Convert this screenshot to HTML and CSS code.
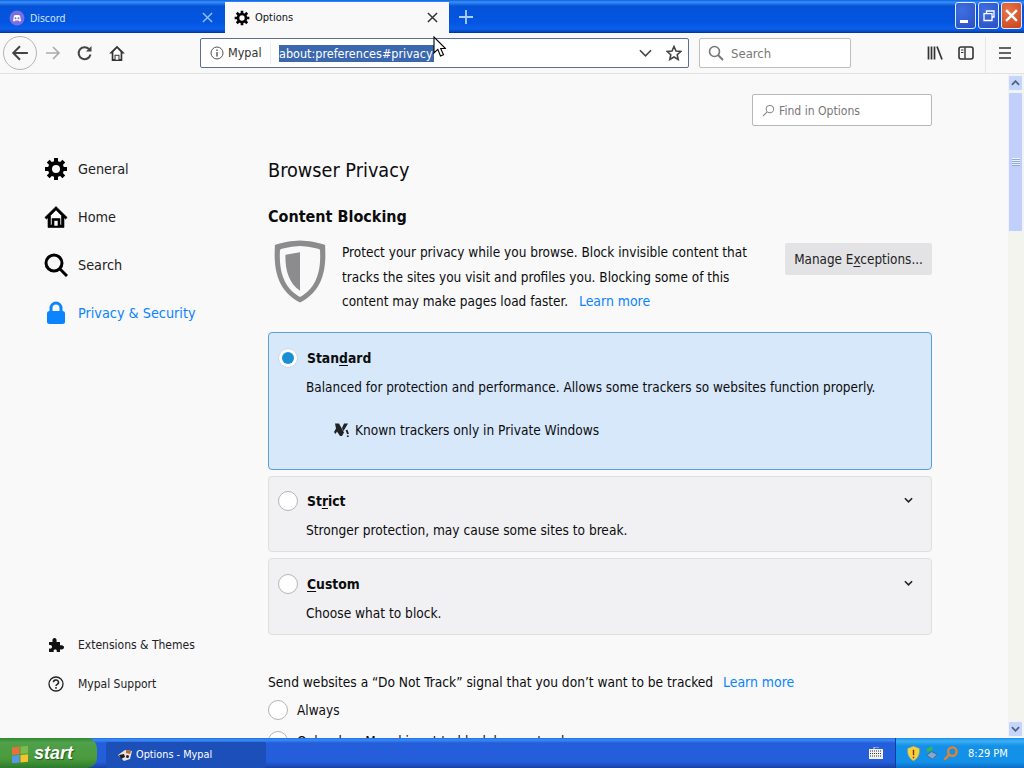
FILE: index.html
```html
<!DOCTYPE html>
<html lang="en">
<head>
  <meta charset="UTF-8" />
  <title>Options - Mypal</title>
  <link rel="stylesheet" href="styles.css">
</head>
<body>
  <div class="tabbar">
    <div class="tab">
      <svg class="tab-icon" viewBox="0 0 16 16"><circle cx="8" cy="8" r="7.5" fill="#7a6fe0"/><path d="M4 11 5 5.500 7 5h2l2 .5 1 5.500-1.500.5-.8-1H6.300l-.8 1z" fill="#fff"/><circle cx="6.500" cy="8.300" r="1" fill="#7a6fe0"/><circle cx="9.500" cy="8.300" r="1" fill="#7a6fe0"/></svg>
      <span class="tab-title">Discord</span>
      <svg class="tab-close" viewBox="0 0 12 12"><path d="M1 1 11 11M11 1 1 11" stroke="#8fc0f5" stroke-width="1.600" fill="none"/></svg>
    </div>
    <div class="tab active">
      <svg class="tab-icon" viewBox="0 0 24 24"><use href="#gear"/></svg>
      <span class="tab-title">Options</span>
      <svg class="tab-close" viewBox="0 0 12 12"><path d="M1 1 11 11M11 1 1 11" stroke="#333" stroke-width="1.600" fill="none"/></svg>
    </div>
    <svg class="new-tab" viewBox="0 0 14 14"><path d="M7 0V14M0 7H14" stroke="#a9d0fa" stroke-width="1.800"/></svg>
    <div class="win-buttons">
      <div class="win-btn"><span class="min-glyph"></span></div>
      <div class="win-btn"><svg viewBox="0 0 12 12" width="12" height="12"><path d="M3.500 3V1h7.500v6H9M1 3.700h8V10.500H1z" stroke="#fff" stroke-width="1.300" fill="none"/></svg></div>
      <div class="win-btn close"><svg viewBox="0 0 12 12" width="13" height="13"><path d="M1 1 11 11M11 1 1 11" stroke="#fff" stroke-width="2.200" fill="none"/></svg></div>
    </div>
  </div>

  <div class="toolbar">
    <div class="back-btn">
      <svg viewBox="0 0 16 16" width="18" height="18"><path d="M15 8H2M8 2 2 8l6 6" stroke="#444" stroke-width="1.800" fill="none"/></svg>
    </div>
    <svg class="tool-icon" viewBox="0 0 16 16"><path d="M15 8H2M8 2 2 8l6 6" transform="matrix(-1 0 0 1 16 0)" stroke="#aaa" stroke-width="1.600" fill="none"/></svg>
    <svg class="tool-icon" viewBox="0 0 16 16"><path d="M13.500 9.500A6 6 0 1 1 12 4" stroke="#444" stroke-width="2" fill="none"/><path d="M14.500 1v5.500H9z" fill="#444"/></svg>
    <svg class="tool-icon home" viewBox="0 0 16 16"><path d="M8 1.500 1 8.500h2.300V15h9.400V8.500H15zM6.700 14v-3.500h2.600V14z" fill="#333"/><path d="M8 3.800 4.800 7v6.300h1V9.500h4.400v3.800h1V7z" fill="#fff"/></svg>
    <div class="urlbar">
      <svg class="info-icon" viewBox="0 0 14 14"><circle cx="7" cy="7" r="6" stroke="#555" fill="none"/><path d="M7 6v4.500M7 3.500v1.400" stroke="#555" stroke-width="1.400"/></svg>
      <span class="identity">Mypal</span>
      <span class="url-text"><span class="url-selected">about:preferences#privacy</span></span>
      <svg class="url-chevron" viewBox="0 0 14 8"><path d="M1 1 7 7l6-6" stroke="#444" stroke-width="1.700" fill="none"/></svg>
      <svg class="url-star" viewBox="0 0 16 16"><path d="M8 1.500 10 6l4.800.5-3.600 3.200 1 4.800L8 12l-4.200 2.500 1-4.800L1.200 6.500 6 6z" stroke="#444" stroke-width="1.600" fill="none"/></svg>
    </div>
    <div class="searchbar">
      <svg viewBox="0 0 16 16" width="16" height="16"><circle cx="6.500" cy="6.500" r="5" stroke="#777" stroke-width="1.600" fill="none"/><path d="M10 10 15 15" stroke="#777" stroke-width="2"/></svg>
      <span>Search</span>
    </div>
    <div class="tool-right">
      <svg class="tool-icon" viewBox="0 0 16 16"><path d="M1.500 1.500V14.500M4.500 1.500V14.500M7.500 1.500V14.500M10 1.500 15 14.500" stroke="#333" stroke-width="1.700" fill="none"/></svg>
      <svg class="tool-icon" viewBox="0 0 16 16"><rect x="1" y="2" width="14" height="12" rx="2" stroke="#333" stroke-width="1.600" fill="none"/><path d="M7 2.500V13.500" stroke="#333" stroke-width="1.400"/><path d="M3 5h2.500M3 7.500h2.500" stroke="#333"/></svg>
      <div class="tool-sep"></div>
      <svg class="tool-icon" viewBox="0 0 16 16"><path d="M2 3H14M2 8H14M2 13H14" stroke="#333" stroke-width="1.700"/></svg>
    </div>
  </div>

  <div class="viewport">
    <div class="page">
      <nav class="sidebar">
        <div class="nav-group">
          <div class="nav-item">
            <svg class="nav-icon" viewBox="0 0 24 24"><use href="#gear"/></svg>General
          </div>
          <div class="nav-item">
            <svg class="nav-icon" viewBox="0 0 24 24"><path d="M12 1.500 0.800 12.500 2.500 14 4 12.700V22.500H20V12.700L21.500 14l1.700-1.500zM10 21v-5.500h4V21zM6.500 20V10.500L12 5l5.500 5.500V20H16v-6.500H8V20z" fill="#000" fill-rule="evenodd" stroke="#000" stroke-width=".6"/></svg>Home
          </div>
          <div class="nav-item">
            <svg class="nav-icon" viewBox="0 0 24 24"><circle cx="10" cy="10" r="8" stroke="#000" stroke-width="3" fill="none"/><path d="M15.500 15.500 23 23" stroke="#000" stroke-width="3"/></svg>Search
          </div>
          <div class="nav-item selected">
            <svg class="nav-icon" viewBox="0 0 24 24"><path d="M7 11V7a5 5 0 0 1 10 0v4" stroke="#0a84ff" stroke-width="3" fill="none"/><rect x="3" y="10" width="18" height="13" rx="2.500" fill="#0a84ff"/></svg>Privacy &amp; Security
          </div>
        </div>
        <div class="nav-group small">
          <div class="nav-item">
            <svg class="nav-icon" viewBox="0 0 16 16"><path d="M1 5h3.500C4 2 5 1 6.500 1S9 2 8.500 5H12v3.300c3-.6 4 .5 4 2s-1 2.600-4 2V15H8.700c.5-2-.5-2.500-1.500-2.500S5.200 13 5.700 15H1v-3.500c2 .5 3-.2 3-1.700S3 7.600 1 8z" fill="#111"/></svg>Extensions &amp; Themes
          </div>
          <div class="nav-item">
            <svg class="nav-icon" viewBox="0 0 16 16"><circle cx="8" cy="8" r="7" stroke="#222" stroke-width="1.300" fill="none"/><path d="M5.500 6.300a2.500 2.300 0 1 1 3.700 2C8.300 8.800 8 9.200 8 10" stroke="#222" stroke-width="1.500" fill="none"/><path d="M8 11v1.800" stroke="#222" stroke-width="1.500"/></svg>Mypal Support
          </div>
        </div>
      </nav>

      <main class="main">
        <div class="find-row">
          <div class="find-box">
            <svg viewBox="0 0 14 14" width="13" height="13"><circle cx="8.500" cy="5.500" r="4" stroke="#888" stroke-width="1.100" fill="none"/><path d="M5.500 8.500 1 13" stroke="#888" stroke-width="1.200"/></svg>
            <span>Find in Options</span>
          </div>
        </div>
        <h1>Browser Privacy</h1>
        <h2>Content Blocking</h2>
        <div class="intro">
          <svg class="shield" viewBox="0 0 56 64" preserveAspectRatio="none"><path d="M28 1.500C20 2 10 3 3 6 1.500 28 4 50 28 62.500 52 50 54.500 28 53 6 46 3 36 2 28 1.500z" fill="#8c8c8e"/><path d="M28 7C21 7.500 13 8.500 8 10.500 7 28 9.500 47 28 57 46.500 47 49 28 48 10.500 43 8.500 35 7.500 28 7z" fill="#f9f9fa"/><path d="M28 13 13.500 15.500C13 29 16 43 28 51z" fill="#8c8c8e"/></svg>
          <p>Protect your privacy while you browse. Block invisible content that tracks the sites you visit and profiles you. Blocking some of this content may make pages load faster. <a class="link">Learn more</a></p>
          <button class="manage-btn">Manage E<u>x</u>ceptions...</button>
        </div>

        <div class="card selected">
          <div class="card-head">
            <span class="radio checked"></span>
            <span class="card-title">Stan<u>d</u>ard</span>
          </div>
          <div class="card-desc">Balanced for protection and performance. Allows some trackers so websites function properly.</div>
          <div class="card-note">
            <svg viewBox="0 0 16 16" width="16" height="16"><path d="M1 1.500h4l5 9-2 3.500H6L3 9.500 1.500 12 0 10l2-3.500zM10 1.500h4L9.500 9 8 6z" fill="#222"/><path d="M12.500 8l1.500 4" stroke="#222" stroke-width="2"/><path d="M13.800 13.500v1.500" stroke="#222" stroke-width="1.800"/></svg>
            Known trackers only in Private Windows
          </div>
        </div>
        <div class="card">
          <div class="card-head">
            <span class="radio"></span>
            <span class="card-title">St<u>r</u>ict</span>
            <svg class="card-chevron" viewBox="0 0 10 6"><path d="M1 1 5 5 9 1" stroke="#222" stroke-width="1.800" fill="none"/></svg>
          </div>
          <div class="card-desc">Stronger protection, may cause some sites to break.</div>
        </div>
        <div class="card">
          <div class="card-head">
            <span class="radio"></span>
            <span class="card-title"><u>C</u>ustom</span>
            <svg class="card-chevron" viewBox="0 0 10 6"><path d="M1 1 5 5 9 1" stroke="#222" stroke-width="1.800" fill="none"/></svg>
          </div>
          <div class="card-desc">Choose what to block.</div>
        </div>

        <p class="dnt">Send websites a “Do Not Track” signal that you don’t want to be tracked <a class="link">Learn more</a></p>
        <div class="dnt-option"><span class="radio"></span>Always</div>
        <div class="dnt-option"><span class="radio"></span>Only when Mypal is set to block known trackers</div>
      </main>
    </div>

    <div class="scrollbar">
      <div class="scroll-btn"><svg viewBox="0 0 10 6" width="9" height="6"><path d="M1 5 5 1l4 4" stroke="#4d6185" stroke-width="2" fill="none"/></svg></div>
      <div class="scroll-thumb"><span class="grip"></span></div>
      <div class="scroll-track"></div>
      <div class="scroll-btn"><svg viewBox="0 0 10 6" width="9" height="6"><path d="M1 1 5 5l4-4" stroke="#4d6185" stroke-width="2" fill="none"/></svg></div>
    </div>
  </div>

  <div class="taskbar">
    <div class="start">
      <svg viewBox="0 0 18 18" width="18" height="19"><g transform="skewY(-6) translate(0 2)"><rect x="1" y="1" width="7.500" height="7.500" fill="#e8703a"/><rect x="9.500" y="1" width="7.500" height="7.500" fill="#7dbb4a"/><rect x="1" y="9.500" width="7.500" height="7.500" fill="#5a96e6"/><rect x="9.500" y="9.500" width="7.500" height="7.500" fill="#f5c32c"/></g></svg>
      <span>start</span>
    </div>
    <div class="task-btn">
      <svg viewBox="0 0 16 16" width="16" height="16"><path d="M1 8 8 3l7 1-2 8-6 2z" fill="#e4e4e4"/><path d="M2 8l5-1 1 3-4 2z" fill="#2a1c10"/><path d="M9 3l5 1-1 3-4-1z" fill="#c8641e"/><circle cx="10.500" cy="9.500" r="1.500" fill="#222"/></svg>
      <span>Options - Mypal</span>
    </div>
    <svg class="keyboard" viewBox="0 0 14 12" width="14" height="12"><rect x="0" y="2" width="14" height="10" fill="#f2f2f2"/><path d="M1 4h12M1 6.500h12M1 9h12" stroke="#333" stroke-dasharray="1 1"/><path d="M5 2V0h5" stroke="#ddd" fill="none"/></svg>
    <div class="tray">
      <svg viewBox="0 0 14 16" width="13" height="15"><path d="M7 0 13.500 2.500C14 9 12 13 7 16 2 13 0 9 .5 2.500z" fill="#f4d33a" stroke="#7a8fae" stroke-width=".7"/><path d="M7 4v6M7 11.500v1.500" stroke="#8a2a10" stroke-width="1.500"/></svg>
      <svg viewBox="0 0 16 16" width="15" height="15"><path d="M3 3 9 0v5L3 6z" fill="#3bb44a"/><path d="M8 6l6 3-5 5-6-4z" fill="#8ba6cf" stroke="#355" stroke-width=".6"/></svg>
      <svg viewBox="0 0 16 16" width="15" height="15"><circle cx="10" cy="6" r="4.500" stroke="#e8832a" stroke-width="2.500" fill="none"/><path d="M7 9 1.500 14.500" stroke="#e8832a" stroke-width="2.500"/></svg>
      <span class="clock">8:29 PM</span>
    </div>
  </div>

  <svg class="cursor" viewBox="0 0 13 22" width="13" height="22"><path d="M1 1V17L4.800 13.400 7.500 20l3-1.200-2.800-6.300H12.500z" fill="#fff" stroke="#000" stroke-width="1.100"/></svg>

  <svg class="defs" width="0" height="0">
    <symbol id="gear" viewBox="0 0 24 24">
      <circle cx="12" cy="12" r="6" stroke="#000" stroke-width="4" fill="none"/>
      <g stroke="#000" stroke-width="4">
        <path d="M12 1V6M12 18V23M1 12H6M18 12H23M4.200 4.200 7.800 7.800M16.200 16.200 19.800 19.800M19.800 4.200 16.200 7.800M7.800 16.200 4.200 19.800"/>
      </g>
    </symbol>
  </svg>
</body>
</html>
```

FILE: styles.css
```css
* {
  margin: 0;
  padding: 0;
  box-sizing: border-box;
}
html, body {
  height: 100%;
  overflow: hidden;
}
body {
  position: relative;
  display: flex;
  flex-direction: column;
  font-family: "DejaVu Sans", sans-serif;
  font-stretch: condensed;
  font-size: 13.500px;
  color: #0c0c0d;
  background: #f9f9fa;
}
u {
  text-underline-offset: 2px;
}
.defs {
  position: absolute;
}

/* tabs */
.tabbar {
  display: flex;
  align-items: flex-end;
  height: 33px;
  flex: none;
  background: linear-gradient(#0a5fe6 0, #3a90f5 2px, #0553d8 6px, #0355e0 22px, #0a5fec 29px, #0544b8 32px, #02307f 33px);
}
.tab {
  display: flex;
  align-items: center;
  width: 225px;
  height: 31px;
  padding: 0 12px 0 9px;
  color: #cfe5fb;
  font-size: 10.500px;
}
.tab.active {
  width: 224px;
  padding-right: 11px;
  background: #f9f9fa;
  color: #111;
  font-size: 11px;
}
.tab-icon {
  width: 16px;
  height: 16px;
  margin-right: 5px;
}
.tab-title {
  flex: 1;
}
.tab-close {
  width: 11px;
  height: 11px;
}
.new-tab {
  width: 14px;
  height: 14px;
  margin: 0 0 9px 10px;
}
.win-buttons {
  display: flex;
  gap: 2px;
  margin: 0 2px 4px auto;
}
.win-btn {
  display: flex;
  align-items: center;
  justify-content: center;
  width: 21px;
  height: 27px;
  border: 1px solid #dfeafc;
  border-radius: 3px;
  background: radial-gradient(circle at 30% 30%, #3f6fe0, #2a4fc4);
}
.win-btn.close {
  background: radial-gradient(circle at 30% 30%, #e8754a, #c9421e);
}
.min-glyph {
  width: 8px;
  height: 3px;
  margin: 11px 3px 0 0;
  background: #fff;
}

/* toolbar */
.toolbar {
  display: flex;
  align-items: center;
  height: 41px;
  flex: none;
  padding: 0 11px 0 3px;
  background: #f9f9fa;
  border-bottom: 1px solid #e2e2e4;
}
.back-btn {
  display: flex;
  align-items: center;
  justify-content: center;
  width: 34px;
  height: 34px;
  margin-right: 8px;
  border: 1px solid #b4b4b4;
  border-radius: 50%;
}
.tool-icon {
  width: 16px;
  height: 16px;
  margin-right: 16px;
}
.tool-icon.home {
  width: 18px;
  height: 18px;
  margin-left: -1px;
  margin-right: 15px;
}
.urlbar {
  display: flex;
  align-items: center;
  width: 489px;
  height: 30px;
  margin-left: 59px;
  padding: 0 6px 0 9px;
  background: #fff;
  border: 1px solid #5a6f96;
  border-radius: 2px;
  font-size: 12.500px;
}
.info-icon {
  width: 14px;
  height: 14px;
  margin-right: 4px;
}
.identity {
  width: 43px;
  margin-right: 8px;
  border-right: 1px solid #ececee;
  color: #333;
  line-height: 22px;
}
.url-text {
  flex: 1;
}
.url-selected {
  display: inline-block;
  padding-right: 1px;
  background: #3a67ae;
  color: #fff;
  line-height: 17px;
}
.url-chevron {
  width: 13px;
  height: 8px;
  margin-right: 14px;
}
.url-star {
  width: 16px;
  height: 16px;
}
.searchbar {
  display: flex;
  align-items: center;
  gap: 7px;
  width: 152px;
  height: 30px;
  margin-left: 10px;
  padding-left: 8px;
  background: #fff;
  border: 1px solid #bfbfbf;
  border-radius: 2px;
  color: #777;
  font-size: 13px;
}
.tool-right {
  display: flex;
  align-items: center;
  height: 40px;
  margin-left: auto;
}
.tool-right .tool-icon {
  margin: 0 0 0 15px;
}
.tool-sep {
  align-self: flex-end;
  width: 1px;
  height: 36px;
  margin: 0 -4px 0 11px;
  background: #e6e6e8;
}

/* page */
.viewport {
  display: flex;
  flex: 1;
  min-height: 0;
}
.page {
  display: flex;
  flex: 1;
  min-width: 0;
  overflow: hidden;
}
.sidebar {
  display: flex;
  flex-direction: column;
  justify-content: space-between;
  width: 268px;
  flex: none;
  padding: 71px 0 35px 44px;
}
.nav-item {
  display: flex;
  align-items: center;
  gap: 10px;
  height: 48px;
  font-size: 14.300px;
  color: #222;
}
.nav-item.selected {
  color: #0a84ff;
}
.nav-icon {
  width: 24px;
  height: 24px;
}
.nav-group.small .nav-item {
  height: 39px;
  gap: 14px;
  padding-left: 4px;
  font-size: 12px;
}
.nav-group.small .nav-icon {
  width: 16px;
  height: 16px;
}
.main {
  width: 664px;
  flex: none;
}
.find-row {
  display: flex;
  justify-content: flex-end;
  padding-top: 20px;
}
.find-box {
  display: flex;
  align-items: center;
  gap: 4px;
  width: 180px;
  height: 32px;
  padding-left: 9px;
  background: #fff;
  border: 1px solid #b8b8b8;
  border-radius: 2px;
  color: #777;
  font-size: 12.100px;
}
.find-box span {
  padding-top: 1px;
}
h1 {
  margin-top: 29px;
  font-size: 19.700px;
  font-weight: 400;
  line-height: 32px;
}
h2 {
  margin-top: 18px;
  font-size: 16px;
  line-height: 24px;
}
.intro {
  display: flex;
  align-items: flex-start;
  margin-top: 11px;
}
.shield {
  width: 56px;
  height: 65px;
  flex: none;
  margin: -1px 14px 0 4px;
}
.intro p {
  flex: 1;
  line-height: 24.500px;
  padding-right: 20px;
}
.link {
  margin-left: 6px;
  color: #0a84ff;
  font-size: 13.900px;
}
.intro .link {
  margin-left: 7px;
}
.manage-btn {
  width: 147px;
  height: 32px;
  flex: none;
  margin-top: 3px;
  background: #e3e3e5;
  border: none;
  border-radius: 2px;
  color: #222;
  font: inherit;
  font-size: 13.400px;
}
.card {
  margin: 6px 0;
  padding: 12.500px 9px 9px;
  background: #f1f1f3;
  border: 1px solid #dfdfe1;
  border-radius: 4px;
}
.card.selected {
  height: 138px;
  margin-top: 18px;
  padding-top: 13px;
  background: #d7e8fb;
  border-color: #5a9fd9;
}
.card-head {
  display: flex;
  align-items: center;
  gap: 9px;
  height: 24px;
}
.card-title {
  flex: 1;
  font-size: 13.800px;
  font-weight: 700;
}
.card-chevron {
  width: 9px;
  height: 6px;
  margin: 0 9px 2px 0;
}
.card-desc {
  margin: 5px 0 0 28px;
  font-size: 13.600px;
  line-height: 24px;
}
.card.selected .card-desc {
  margin-top: 6px;
  font-size: 13.450px;
}
.card-note {
  display: flex;
  align-items: center;
  gap: 5px;
  margin: 18px 0 0 56px;
  font-size: 13.600px;
  line-height: 24px;
}
.radio {
  position: relative;
  display: inline-block;
  width: 20px;
  height: 20px;
  flex: none;
  background: #fff;
  border: 1px solid #b4b4b6;
  border-radius: 50%;
}
.radio.checked {
  border-color: #c5d8ee;
}
.radio.checked::after {
  content: "";
  position: absolute;
  top: 3px;
  left: 3px;
  width: 12px;
  height: 12px;
  background: #1b8fd6;
  border-radius: 50%;
}
.dnt {
  margin-top: 35px;
  font-size: 13.650px;
  line-height: 24px;
}
.dnt-option {
  display: flex;
  align-items: center;
  gap: 9px;
  height: 30px;
  margin-top: 1px;
}

/* scrollbar */
.scrollbar {
  display: flex;
  flex-direction: column;
  width: 16px;
  flex: none;
  padding: 1px 1px 1px 0;
  background: #f4f4ee;
}
.scroll-btn {
  display: flex;
  align-items: center;
  justify-content: center;
  height: 16px;
  flex: none;
  background: #c6d6fa;
  border: 1px solid #eef2fd;
  border-radius: 2px;
}
.scroll-thumb {
  display: flex;
  align-items: center;
  justify-content: center;
  height: 140px;
  margin-top: 1px;
  background: #c1d0fb;
  border: 1px solid #eef2fd;
  border-radius: 2px;
}
.grip {
  width: 8px;
  height: 8px;
  background: repeating-linear-gradient(#eef2fd 0 1px, #8fa6de 1px 2px);
}
.scroll-track {
  flex: 1;
}

/* taskbar */
.taskbar {
  display: flex;
  align-items: center;
  height: 30px;
  flex: none;
  background: linear-gradient(#1f6fe8 0, #3a8cf2 2px, #245edb 5px, #245edb 24px, #1941a5 30px);
  color: #fff;
  font-size: 12px;
}
.start {
  display: flex;
  align-items: center;
  gap: 5px;
  width: 97px;
  height: 30px;
  padding-left: 11px;
  background: linear-gradient(#2f8a2f, #4fa04a 15%, #4a9a3c 70%, #2c7a2c);
  border-radius: 0 10px 10px 0;
  font-family: "Liberation Sans", sans-serif;
  font-size: 18px;
  font-style: italic;
  font-weight: 700;
  text-shadow: 1px 1px 1px #1c5a1c;
}
.task-btn {
  display: flex;
  align-items: center;
  gap: 3px;
  width: 160px;
  height: 26px;
  margin: 3px 0 0 9px;
  padding-left: 11px;
  background: #1d4fb8;
  border-radius: 2px;
  font-size: 10.800px;
}
.keyboard {
  margin-left: auto;
  margin-right: 12px;
}
.tray {
  display: flex;
  align-items: center;
  gap: 4px;
  width: 129px;
  height: 30px;
  padding-left: 11px;
  background: linear-gradient(#1a8fe8 0, #3fb0f5 3px, #1390e8 8px, #1390e8 24px, #0c6cc4 30px);
  border-left: 1px solid #0c3f9c;
}
.clock {
  margin-left: 6px;
  font-size: 11px;
}
.cursor {
  position: absolute;
  top: 36px;
  left: 433px;
}
```
